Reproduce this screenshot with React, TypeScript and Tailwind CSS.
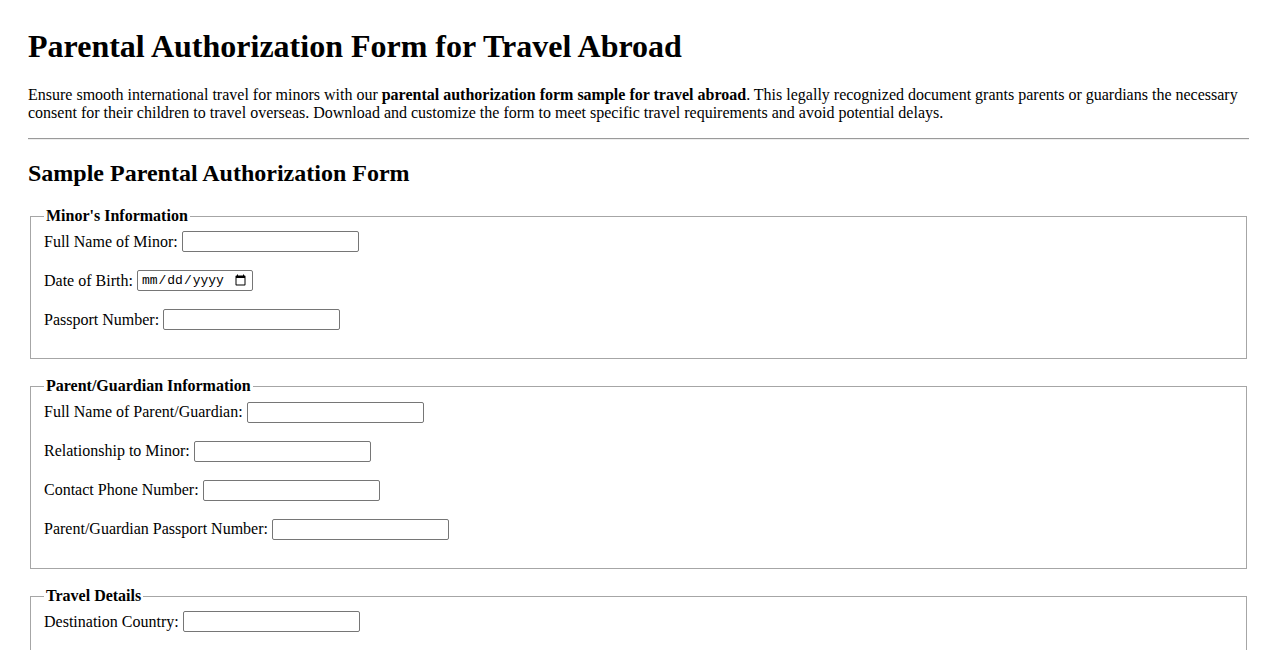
import React from "react";

interface FieldProps {
  label: string;
  type?: "text" | "date";
}

function Field({ label, type = "text" }: FieldProps) {
  return (
    <div className="flex items-center h-[23px] mb-4">
      <label className="whitespace-nowrap">{label}</label>
      {type === "date" ? (
        <input
          type="date"
          className="ml-[4px] h-[21px] w-[116px] border border-[#767676] rounded-[2px] px-[3px] text-[13px] font-['Liberation_Mono',monospace] bg-white text-black"
        />
      ) : (
        <input
          type="text"
          className="ml-[4px] h-[21px] w-[177px] border border-[#767676] rounded-[2px] px-[2px] text-[13px] font-['Liberation_Sans',sans-serif] bg-white"
        />
      )}
    </div>
  );
}

function Section({ title, children }: { title: string; children: React.ReactNode }) {
  return (
    <fieldset className="mx-[2px] mb-[18px] border border-[#a6a6a6] px-[13px] pt-[5px] pb-[11px]">
      <legend className="px-[2px] font-bold leading-[18.4px]">{title}</legend>
      {children}
    </fieldset>
  );
}

export default function App() {
  return (
    <div className="min-h-screen bg-white text-black text-[16px] font-['Liberation_Serif','Times_New_Roman',serif] pl-[28px] pr-[29px] pt-[28px] pb-10">
      <h1 className="text-[32px] font-bold leading-[37px] mb-[21px]">
        Parental Authorization Form for Travel Abroad
      </h1>

      <p className="leading-[18px]">
        Ensure smooth international travel for minors with our{" "}
        <strong className="font-bold">parental authorization form sample for travel abroad</strong>. This
        legally recognized document grants parents or guardians the necessary consent for their children to
        travel overseas. Download and customize the form to meet specific travel requirements and avoid
        potential delays.
      </p>

      <hr className="mt-[16px] border-t border-t-[#9a9a9a] border-b border-b-[#eeeeee]" />

      <h2 className="text-[24px] font-bold leading-[28px] mt-[19px] mb-[20px]">
        Sample Parental Authorization Form
      </h2>

      <form>
        <Section title="Minor's Information">
          <Field label="Full Name of Minor:" />
          <Field label="Date of Birth:" type="date" />
          <Field label="Passport Number:" />
        </Section>

        <Section title="Parent/Guardian Information">
          <Field label="Full Name of Parent/Guardian:" />
          <Field label="Relationship to Minor:" />
          <Field label="Contact Phone Number:" />
          <Field label="Parent/Guardian Passport Number:" />
        </Section>

        <Section title="Travel Details">
          <Field label="Destination Country:" />
          <Field label="Departure Date:" type="date" />
          <Field label="Return Date:" type="date" />
          <Field label="Accompanying Adult (if any):" />
        </Section>
      </form>
    </div>
  );
}
